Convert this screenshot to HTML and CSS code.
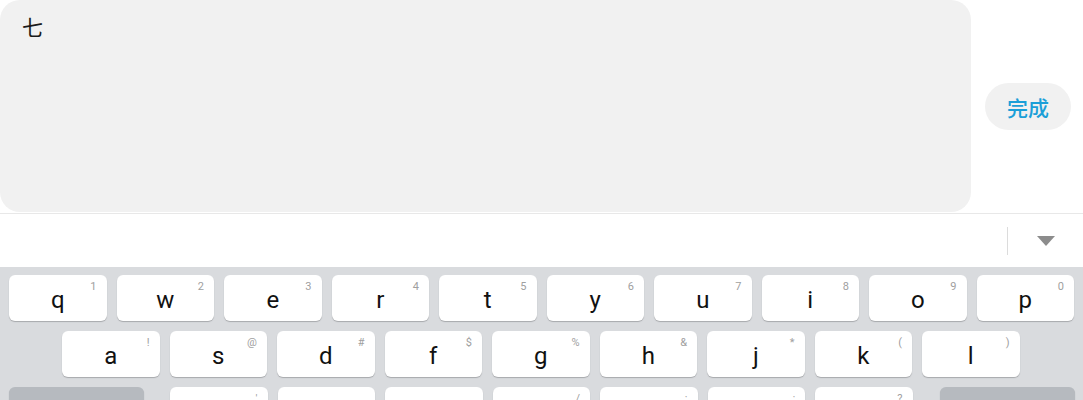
FILE: index.html
```html
<!DOCTYPE html>
<html lang="zh">
<head>
    <meta charset="UTF-8">
    <meta name="viewport" content="width=device-width, initial-scale=1.0">
    <title>输入</title>
    <link rel="stylesheet" href="styles.css">
</head>
<body>
    <div class="editor">
        <div class="text-box">七</div>
        <div class="done-area">
            <button class="done-btn">完成</button>
        </div>
    </div>

    <div class="toolbar">
        <span class="divider"></span>
        <span class="collapse"></span>
    </div>

    <div class="keyboard">
        <div class="row">
            <div class="key">q<sup>1</sup></div>
            <div class="key">w<sup>2</sup></div>
            <div class="key">e<sup>3</sup></div>
            <div class="key">r<sup>4</sup></div>
            <div class="key">t<sup>5</sup></div>
            <div class="key">y<sup>6</sup></div>
            <div class="key">u<sup>7</sup></div>
            <div class="key">i<sup>8</sup></div>
            <div class="key">o<sup>9</sup></div>
            <div class="key">p<sup>0</sup></div>
        </div>
        <div class="row row-2">
            <div class="key">a<sup>!</sup></div>
            <div class="key">s<sup>@</sup></div>
            <div class="key">d<sup>#</sup></div>
            <div class="key">f<sup>$</sup></div>
            <div class="key">g<sup>%</sup></div>
            <div class="key">h<sup>&amp;</sup></div>
            <div class="key">j<sup>*</sup></div>
            <div class="key">k<sup>(</sup></div>
            <div class="key">l<sup>)</sup></div>
        </div>
        <div class="row row-3">
            <div class="key key-fn shift"></div>
            <div class="key"><sup>'</sup></div>
            <div class="key"><sup>,</sup></div>
            <div class="key"><sup>.</sup></div>
            <div class="key"><sup>/</sup></div>
            <div class="key"><sup>:</sup></div>
            <div class="key"><sup>;</sup></div>
            <div class="key"><sup>?</sup></div>
            <div class="key key-fn backspace"></div>
        </div>
    </div>
</body>
</html>
```

FILE: styles.css
```css
body {
    margin: 0;
    padding: 0;
    width: 1083px;
    height: 400px;
    overflow: hidden;
    background-color: #fff;
    font-family: Roboto, "Noto Sans CJK SC", sans-serif;
}

.editor {
    display: flex;
    height: 213px;
}

.text-box {
    width: 949px;
    height: 200px;
    padding: 12px 0 0 22px;
    background-color: #f1f1f1;
    border-radius: 20px;
    font-family: "Noto Sans CJK SC", sans-serif;
    font-size: 21px;
    line-height: 28px;
    color: #1a1a1a;
}

.done-area {
    flex: 1;
    display: flex;
    align-items: center;
    padding-left: 14px;
}

.done-btn {
    width: 86px;
    height: 47px;
    border: none;
    border-radius: 24px;
    background-color: #f1f1f1;
    color: #1b9fd8;
    font-family: "Noto Sans CJK SC", sans-serif;
    font-size: 21px;
    font-weight: 500;
    padding: 0;
}

.toolbar {
    height: 54px;
    border-top: 1px solid #e8e8e8;
    display: flex;
    align-items: center;
    justify-content: flex-end;
    box-sizing: border-box;
}

.divider {
    width: 1px;
    height: 28px;
    background-color: #dcdcdc;
    margin-right: 29px;
}

.collapse {
    width: 0;
    height: 0;
    border-left: 9px solid transparent;
    border-right: 9px solid transparent;
    border-top: 10px solid #8c8c8c;
    margin-right: 28px;
}

.keyboard {
    height: 133px;
    background-color: #d9dbde;
    padding: 8px 10px 0 9px;
    box-sizing: border-box;
}

.row {
    display: flex;
    gap: 10px;
    margin-bottom: 10px;
}

.row-2 {
    padding-left: 53px;
}

.row-3 {
    margin-bottom: 0;
}

.key {
    position: relative;
    flex: none;
    width: 97.5px;
    height: 46px;
    background-color: #fff;
    border-radius: 6px;
    box-shadow: 0 1px 1px #a7a9ac;
    display: flex;
    align-items: center;
    justify-content: center;
    font-size: 24px;
    color: #111;
    padding-top: 4px;
    box-sizing: border-box;
}

.key sup {
    position: absolute;
    top: 6px;
    right: 10px;
    font-size: 11px;
    line-height: 12px;
    color: #a0a0a0;
}

.key-fn {
    background-color: #b6babf;
    width: 135px;
}

.shift {
    margin-right: 16px;
}

.backspace {
    margin-left: 17px;
}
```
